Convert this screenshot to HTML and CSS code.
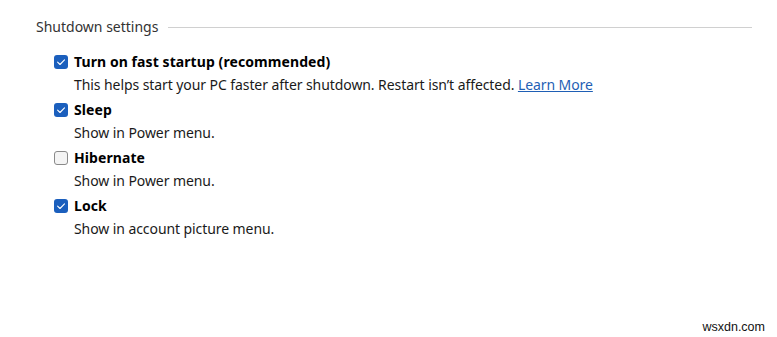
FILE: index.html
```html
<!DOCTYPE html>
<html>
<head>
<meta charset="utf-8">
<link rel="stylesheet" href="styles.css">
</head>
<body>
<div class="page">
  <div class="legend">
    <span class="legend-text">Shutdown settings</span>
    <span class="legend-line"></span>
  </div>
  <div class="options">
    <div class="option">
      <div class="row">
        <span class="box checked"><svg viewBox="0 0 14 14" width="14" height="14"><path d="M3.6 7.2 L6 9.5 L10.5 4.8" fill="none" stroke="#fff" stroke-width="1.1" stroke-linecap="round" stroke-linejoin="round"/></svg></span>
        <span class="title">Turn on fast startup (recommended)</span>
      </div>
      <div class="desc">This helps start your PC faster after shutdown. Restart isn’t affected. <a class="link" href="#">Learn More</a></div>
    </div>
    <div class="option">
      <div class="row">
        <span class="box checked"><svg viewBox="0 0 14 14" width="14" height="14"><path d="M3.6 7.2 L6 9.5 L10.5 4.8" fill="none" stroke="#fff" stroke-width="1.1" stroke-linecap="round" stroke-linejoin="round"/></svg></span>
        <span class="title">Sleep</span>
      </div>
      <div class="desc">Show in Power menu.</div>
    </div>
    <div class="option">
      <div class="row">
        <span class="box"></span>
        <span class="title">Hibernate</span>
      </div>
      <div class="desc">Show in Power menu.</div>
    </div>
    <div class="option">
      <div class="row">
        <span class="box checked"><svg viewBox="0 0 14 14" width="14" height="14"><path d="M3.6 7.2 L6 9.5 L10.5 4.8" fill="none" stroke="#fff" stroke-width="1.1" stroke-linecap="round" stroke-linejoin="round"/></svg></span>
        <span class="title">Lock</span>
      </div>
      <div class="desc">Show in account picture menu.</div>
    </div>
  </div>
  <div class="watermark">wsxdn.com</div>
</div>
</body>
</html>
```
FILE: styles.css
```css
html, body {
  margin: 0;
  padding: 0;
  background: #ffffff;
}
.page {
  width: 777px;
  height: 337px;
  position: relative;
  font-family: "Noto Sans", "Open Sans", sans-serif;
  color: #1a1a1a;
  font-size: 14px;
  overflow: hidden;
}
.legend {
  display: flex;
  align-items: center;
  gap: 10px;
  padding: 17px 25px 0 36px;
  height: 20px;
}
.legend-text {
  color: #333;
  line-height: 20px;
  white-space: nowrap;
}
.legend-line {
  flex: 1;
  height: 1px;
  background: #d0d0d0;
  margin-top: 1px;
}
.options {
  display: flex;
  flex-direction: column;
  gap: 4px;
  padding: 15px 0 0 54px;
}
.option {
  display: flex;
  flex-direction: column;
  height: 44px;
}
.row {
  display: flex;
  align-items: center;
  gap: 6px;
  height: 20px;
}
.box {
  width: 14px;
  height: 14px;
  box-sizing: border-box;
  border-radius: 3px;
  border: 1px solid #8a8a8a;
  background: #f4f4f4;
  display: flex;
}
.box.checked {
  border: none;
  background: #1b5fbd;
}
.title {
  font-weight: 700;
  color: #000;
  line-height: 20px;
  letter-spacing: 0.08px;
}
.desc {
  padding-left: 20px;
  line-height: 20px;
  margin-top: 3px;
  color: #1a1a1a;
  letter-spacing: -0.08px;
}
.link {
  color: #1f5fb5;
  text-decoration: underline;
}
.watermark {
  position: absolute;
  right: 12px;
  bottom: 3px;
  font-family: "Liberation Sans", Arial, sans-serif;
  font-size: 12.5px;
  color: #111;
}
```
